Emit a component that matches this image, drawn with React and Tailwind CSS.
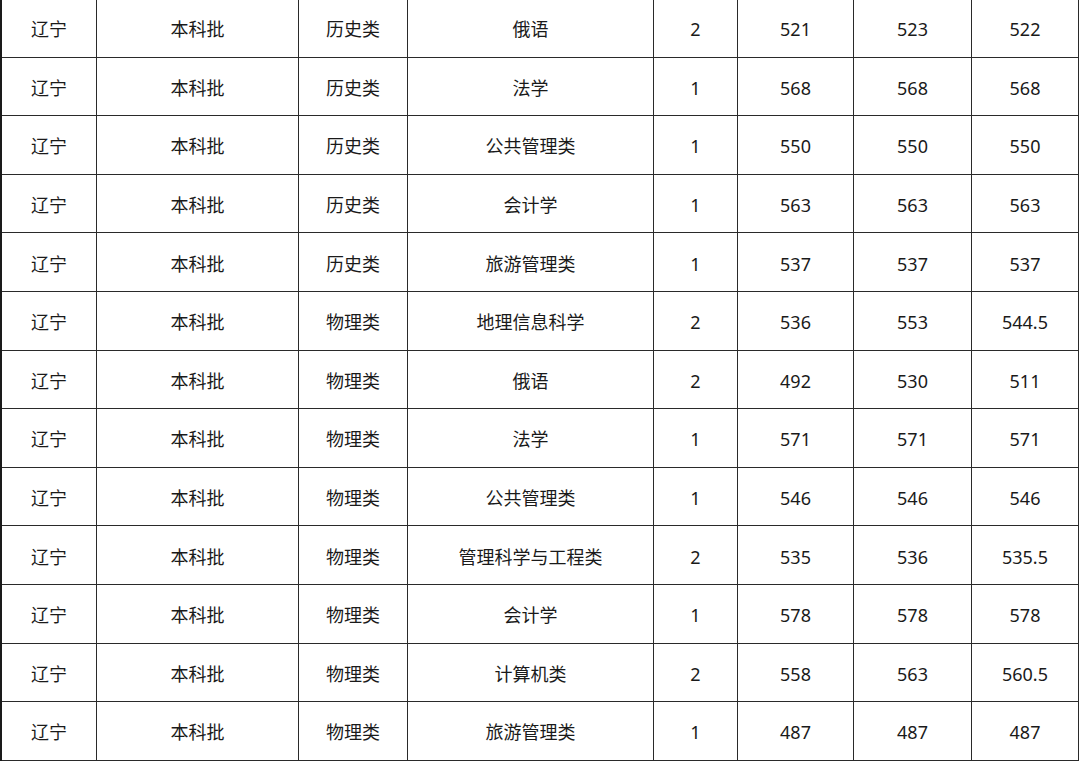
const rows = [
  ["辽宁", "本科批", "历史类", "俄语", "2", "521", "523", "522"],
  ["辽宁", "本科批", "历史类", "法学", "1", "568", "568", "568"],
  ["辽宁", "本科批", "历史类", "公共管理类", "1", "550", "550", "550"],
  ["辽宁", "本科批", "历史类", "会计学", "1", "563", "563", "563"],
  ["辽宁", "本科批", "历史类", "旅游管理类", "1", "537", "537", "537"],
  ["辽宁", "本科批", "物理类", "地理信息科学", "2", "536", "553", "544.5"],
  ["辽宁", "本科批", "物理类", "俄语", "2", "492", "530", "511"],
  ["辽宁", "本科批", "物理类", "法学", "1", "571", "571", "571"],
  ["辽宁", "本科批", "物理类", "公共管理类", "1", "546", "546", "546"],
  ["辽宁", "本科批", "物理类", "管理科学与工程类", "2", "535", "536", "535.5"],
  ["辽宁", "本科批", "物理类", "会计学", "1", "578", "578", "578"],
  ["辽宁", "本科批", "物理类", "计算机类", "2", "558", "563", "560.5"],
  ["辽宁", "本科批", "物理类", "旅游管理类", "1", "487", "487", "487"],
];

export default function App() {
  return (
    <div className="w-[1080px] h-[761px] overflow-hidden bg-white">
      <div
        className="-mt-px w-[1079px] border-l-2 border-[#1a1a1a] grid grid-cols-[95px_202px_109px_246px_84px_116px_118px_107px] auto-rows-[58.6px] text-[18px] text-[#1a1a1a]"
        style={{ fontFamily: '"Noto Sans", "Noto Sans CJK SC", sans-serif' }}
      >
        {rows.map((r, i) =>
          r.map((c, j) => (
            <div
              key={i + "-" + j}
              className="flex items-center justify-center pt-[3px] border-r border-b border-[#2a2a2a] leading-none"
            >
              {c}
            </div>
          ))
        )}
      </div>
    </div>
  );
}
